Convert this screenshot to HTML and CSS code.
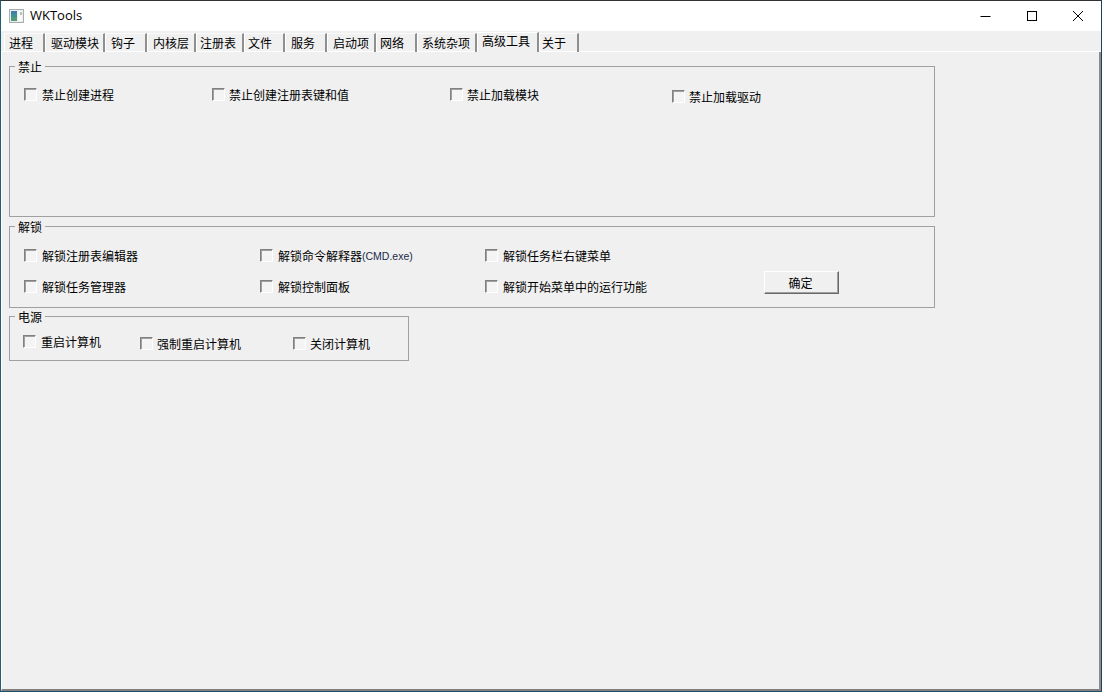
FILE: index.html
```html
<!DOCTYPE html>
<html lang="zh-CN">
<head>
<meta charset="utf-8">
<title>WKTools</title>
<link rel="stylesheet" href="styles.css">
</head>
<body>
<div class="window">
  <header class="titlebar">
    <svg class="app-icon" width="15" height="14" viewBox="0 0 15 14">
      <rect x="0.5" y="0.5" width="14" height="13" fill="#eceeee" stroke="#a8acac"/>
      <rect x="2" y="2" width="6" height="3" fill="#3f7fa8"/>
      <rect x="2" y="5" width="6" height="3" fill="#3f8f9a"/>
      <rect x="2" y="8" width="6" height="4" fill="#4f9a78"/>
      <rect x="9" y="2" width="4" height="10" fill="#f8fafa"/>
      <rect x="11" y="3" width="2" height="3" fill="#a8c8b8"/>
    </svg>
    <span class="app-title">WKTools</span>
    <div class="caption-buttons">
      <svg class="caption" width="46" height="30" viewBox="0 0 46 30"><path d="M17.5 15.5h10" stroke="#000" fill="none"/></svg>
      <svg class="caption" width="46" height="30" viewBox="0 0 46 30"><rect x="18.5" y="10.5" width="9" height="9" stroke="#000" fill="none"/></svg>
      <svg class="caption" width="46" height="30" viewBox="0 0 46 30"><path d="M18 10l10 10M28 10l-10 10" stroke="#000" fill="none"/></svg>
    </div>
  </header>
  <nav class="tabs">
    <span class="tab w41 pad4">进程</span>
    <span class="tab w60">驱动模块</span>
    <span class="tab w42">钩子</span>
    <span class="tab w49">内核层</span>
    <span class="tab w48 pad3">注册表</span>
    <span class="tab w41 pad3">文件</span>
    <span class="tab w42">服务</span>
    <span class="tab w49">启动项</span>
    <span class="tab w41 pad3">网络</span>
    <span class="tab w60 pad4">系统杂项</span>
    <span class="tab tab-active">高级工具</span>
    <span class="tab tab-last">关于</span>
  </nav>
  <main class="page">
    <fieldset class="group group-forbid">
      <legend>禁止</legend>
      <div class="row row-forbid">
        <label class="check"><i class="box"></i>禁止创建进程</label>
        <label class="check tight"><i class="box"></i>禁止创建注册表键和值</label>
        <label class="check tight"><i class="box"></i>禁止加载模块</label>
        <label class="check tight drop2"><i class="box"></i>禁止加载驱动</label>
      </div>
    </fieldset>
    <fieldset class="group group-unlock">
      <legend>解锁</legend>
      <div class="row row-unlock">
        <label class="check"><i class="box"></i>解锁注册表编辑器</label>
        <label class="check"><i class="box"></i>解锁命令解释器<span class="latin">(CMD.exe)</span></label>
        <label class="check"><i class="box"></i>解锁任务栏右键菜单</label>
        <span></span>
      </div>
      <div class="row row-unlock row-second">
        <label class="check"><i class="box"></i>解锁任务管理器</label>
        <label class="check"><i class="box"></i>解锁控制面板</label>
        <label class="check"><i class="box"></i>解锁开始菜单中的运行功能</label>
        <button class="btn" type="button">确定</button>
      </div>
    </fieldset>
    <fieldset class="group group-power">
      <legend>电源</legend>
      <div class="row row-power">
        <label class="check"><i class="box"></i>重启计算机</label>
        <label class="check tight drop2"><i class="box"></i>强制重启计算机</label>
        <label class="check tight drop2"><i class="box"></i>关闭计算机</label>
      </div>
    </fieldset>
  </main>
</div>
</body>
</html>
```
FILE: styles.css
```css
* { box-sizing: border-box; }
html, body { margin: 0; height: 100%; }
body {
  font-family: "Noto Sans CJK SC", "Liberation Sans", sans-serif;
  font-size: 12px;
  color: #000;
  background: #f0f0f0;
  overflow: hidden;
}
.window {
  width: 1102px;
  height: 692px;
  display: flex;
  flex-direction: column;
  background: #f0f0f0;
  border: 1px solid #2a3a44;
  border-left-color: #1f6075;
  border-right-color: #1f3f66;
  border-bottom-color: #1f4f66;
  border-top-color: #333;
}
.titlebar {
  height: 30px;
  background: #fff;
  display: flex;
  align-items: center;
  padding-left: 8px;
  flex: none;
}
.app-icon { margin-right: 6px; }
.app-title {
  font-family: "Open Sans", "Liberation Sans", sans-serif;
  font-size: 13px;
  padding-bottom: 2px;
}
.caption-buttons { margin-left: auto; display: flex; }
.caption { display: block; }
.tabs {
  height: 21px;
  display: flex;
  align-items: flex-end;
  padding-left: 3px;
  border-bottom: 1px solid #fff;
  flex: none;
}
.tab {
  height: 19px;
  margin-bottom: -1px;
  padding-left: 5px;
  line-height: 17px;
  border-top: 1px solid #fafafa;
  border-left: 1px solid #fff;
  border-right: 2px solid #8f8f8f;
  flex: none;
  white-space: nowrap;
  overflow: hidden;
}
.w41 { width: 41px; }
.w42 { width: 42px; }
.w48 { width: 48px; }
.w49 { width: 49px; }
.w60 { width: 60px; }
.pad3 { padding-left: 3px; }
.pad4 { padding-left: 4px; }
.tab-active {
  width: 62px;
  height: 20px;
  line-height: 15px;
  padding-left: 4px;
  background: #f0f0f0;
  border-top-color: #fff;
}
.tab-last {
  width: 40px;
  padding-left: 2px;
}
.page {
  flex: 1;
  padding: 7px 0 0 7px;
  display: flex;
  flex-direction: column;
  align-items: flex-start;
  border-left: 1px solid #fff;
  border-right: 2px solid #8c8c8c;
  border-bottom: 2px solid #808080;
}
.group {
  margin: 0;
  padding: 0;
  border: 1px solid #a0a0a0;
  min-width: 0;
  flex: none;
}
.group legend {
  margin-left: 5px;
  padding: 0 3px;
  line-height: 14px;
  font-size: 12px;
  transform: translateY(1px);
}
.group-forbid { width: 926px; height: 158px; }
.group-unlock { width: 926px; height: 89px; margin-top: 2px; }
.group-power { width: 400px; height: 52px; margin-top: 1px; }
.row { display: grid; align-items: start; }
.row-forbid {
  grid-template-columns: 188px 238px 222px auto;
  padding: 13px 0 0 14px;
}
.row-unlock {
  grid-template-columns: 236px 225px 279px auto;
  padding: 14px 0 0 14px;
}
.row-unlock.row-second { padding-top: 14px; }
.row-power {
  grid-template-columns: 117px 153px auto;
  padding: 10px 0 0 13px;
}
.check {
  display: flex;
  align-items: center;
  height: 17px;
  white-space: nowrap;
}
.drop2 { margin-top: 2px; }
.box {
  width: 13px;
  height: 13px;
  margin-right: 5px;
  background: #f4f4f4;
  border-top: 1px solid #808080;
  border-left: 1px solid #808080;
  border-right: 1px solid #fff;
  border-bottom: 1px solid #fff;
  box-shadow: inset 1px 1px 0 #a0a0a0;
  flex: none;
}
.tight .box { margin-right: 4px; }
.latin {
  font-family: "Liberation Sans", sans-serif;
  font-size: 10.5px;
  color: #1a2a4a;
}
.btn {
  width: 75px;
  height: 23px;
  margin-top: -7px;
  padding: 0 2px 0 0;
  font: inherit;
  color: #000;
  background: #f0f0f0;
  border: 1px solid;
  border-color: #fff #696969 #696969 #fff;
  box-shadow: inset -1px -1px 0 #a0a0a0;
}
```
